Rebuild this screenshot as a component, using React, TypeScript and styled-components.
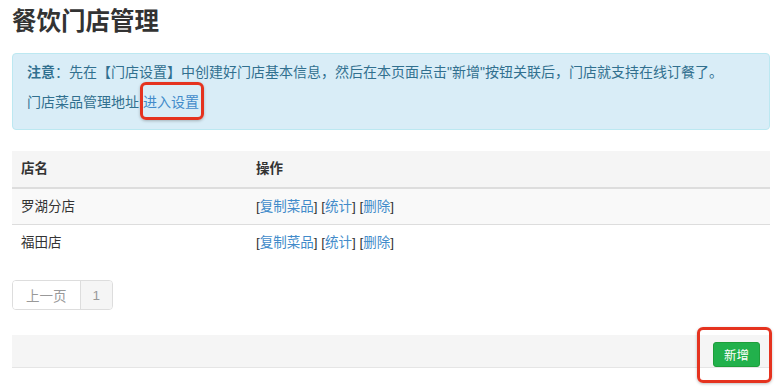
import React from "react";
import styled, { createGlobalStyle } from "styled-components";

const Global = createGlobalStyle`
  html, body { margin: 0; padding: 0; background: #fff; }
  body {
    font-family: "Liberation Sans", "Noto Sans CJK SC", sans-serif;
    font-size: 14px;
    color: #333;
  }
`;

const Page = styled.div`
  padding: 0 10px 24px 12px;
  min-height: 389px;
  box-sizing: border-box;
`;

const Title = styled.h1`
  margin: 7px 0 16px;
  font-size: 24.5px;
  line-height: 30px;
  font-weight: bold;
  color: #333;
`;

const Alert = styled.div`
  background: #d9edf7;
  border: 1px solid #bce8f1;
  border-radius: 4px;
  color: #31708f;
  padding: 8px 14px 17px;
  line-height: 20px;
`;

const AlertLine = styled.p<{ $gap?: number }>`
  margin: ${(p) => p.$gap ?? 0}px 0 0;
`;

const Link = styled.a`
  color: #428bca;
  text-decoration: none;
  cursor: pointer;
`;

const Marked = styled.span`
  position: relative;
  display: inline-block;
`;

const Highlight = styled.span<{ $t: number; $r: number; $b: number; $l: number }>`
  position: absolute;
  top: ${(p) => p.$t}px;
  right: ${(p) => p.$r}px;
  bottom: ${(p) => p.$b}px;
  left: ${(p) => p.$l}px;
  border: 3px solid #e5331f;
  border-radius: 6px;
  box-shadow: 0 1px 3px rgba(0, 0, 0, 0.25);
  pointer-events: none;
`;

const Table = styled.table`
  width: 100%;
  border-collapse: collapse;
  margin-top: 21px;
  font-size: 13.5px;
`;

const HeadCell = styled.th`
  text-align: left;
  font-weight: bold;
  background: #f5f5f5;
  padding: 8px 9px;
  height: 20px;
  line-height: 20px;
  border-bottom: 2px solid #ddd;
  &:first-child { width: 217px; }
`;

const Row = styled.tr<{ $striped?: boolean }>`
  background: ${(p) => (p.$striped ? "#f9f9f9" : "#fff")};
`;

const Cell = styled.td<{ $last?: boolean }>`
  padding: 8px 9px;
  line-height: 19px;
  border-bottom: ${(p) => (p.$last ? "none" : "1px solid #ddd")};
`;

const Pager = styled.div`
  display: inline-flex;
  margin-top: 20px;
  border: 1px solid #ddd;
  border-radius: 4px;
  overflow: hidden;
  font-size: 13.5px;
`;

const PageItem = styled.span<{ $active?: boolean }>`
  display: flex;
  align-items: center;
  justify-content: center;
  height: 28px;
  padding: 0 ${(p) => (p.$active ? 12 : 13)}px;
  color: #999;
  background: ${(p) => (p.$active ? "#f5f5f5" : "#fff")};
  & + & { border-left: 1px solid #ddd; }
`;

const Footer = styled.div`
  margin-top: 25px;
  background: #f5f5f5;
  border-bottom: 1px solid #e5e5e5;
  height: 32px;
  display: flex;
  align-items: center;
  justify-content: flex-end;
  padding-right: 10px;
`;

const AddButton = styled.button`
  position: relative;
  top: 3px;
  width: 47px;
  height: 25px;
  border: 1px solid #1e9e3a;
  border-radius: 3px;
  background: #22b14c;
  color: #fff;
  font-family: inherit;
  font-size: 12.5px;
  padding: 0;
  cursor: pointer;
`;

const stores = ["罗湖分店", "福田店"];

export default function App() {
  return (
    <>
      <Global />
      <Page>
        <Title>餐饮门店管理</Title>
        <Alert>
          <AlertLine>
            <b>注意</b>：先在【门店设置】中创建好门店基本信息，然后在本页面点击"新增"按钮关联后，门店就支持在线订餐了。
          </AlertLine>
          <AlertLine $gap={10}>
            门店菜品管理地址{" "}
            <Marked>
              <Link>进入设置</Link>
              <Highlight $t={-10} $r={-5} $b={-8} $l={-3} />
            </Marked>
          </AlertLine>
        </Alert>
        <Table>
          <thead>
            <tr>
              <HeadCell>店名</HeadCell>
              <HeadCell>操作</HeadCell>
            </tr>
          </thead>
          <tbody>
            {stores.map((s, i) => (
              <Row key={s} $striped={i % 2 === 0}>
                <Cell $last={i === stores.length - 1}>{s}</Cell>
                <Cell $last={i === stores.length - 1}>
                  [<Link>复制菜品</Link>] [<Link>统计</Link>] [<Link>删除</Link>]
                </Cell>
              </Row>
            ))}
          </tbody>
        </Table>
        <Pager>
          <PageItem>上一页</PageItem>
          <PageItem $active>1</PageItem>
        </Pager>
        <Footer>
          <Marked>
            <AddButton>新增</AddButton>
            <Highlight $t={-12} $r={-12} $b={-19} $l={-16} />
          </Marked>
        </Footer>
      </Page>
    </>
  );
}
